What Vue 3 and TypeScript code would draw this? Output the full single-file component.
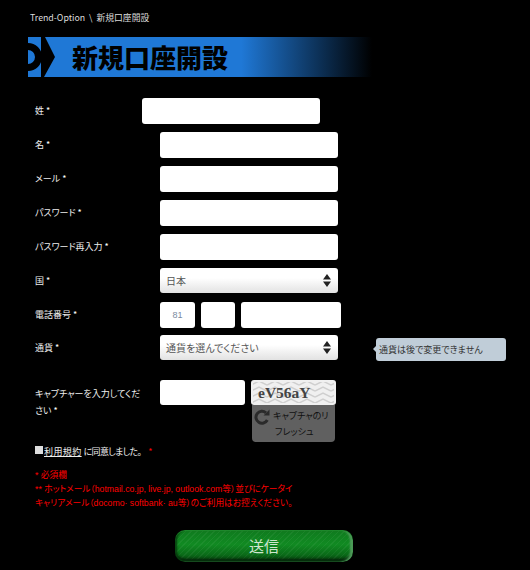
<script setup lang="ts">
interface Row { label: string; first?: boolean }
const textRows: Row[] = [
  { label: '姓', first: true },
  { label: '名' },
  { label: 'メール' },
  { label: 'パスワード' },
  { label: 'パスワード再入力' },
]
</script>

<template>
  <div class="page">
    <div class="crumb">Trend-Option&nbsp; \ &nbsp;新規口座開設</div>
    <div class="banner">
      <svg class="mark" width="28" height="40" viewBox="0 0 28 40">
        <path d="M13 0H17L27 20L16 40H13ZM0 6A14 14 0 0 1 0 34V27A7 7 0 0 0 0 13Z" fill="#000"/>
      </svg>
      <h1 class="title">新規口座開設</h1>
    </div>

    <div class="form">
      <div v-for="r in textRows" :key="r.label" class="row">
        <div class="label">{{ r.label }} <span class="star">*</span></div>
        <div class="input" :class="{ shifted: r.first }"></div>
      </div>

      <div class="row">
        <div class="label">国 <span class="star">*</span></div>
        <div class="select">
          <span>日本</span>
          <svg class="updown" width="8" height="13" viewBox="0 0 8 13"><path d="M4 0L8 5.500H0ZM0 7.500H8L4 13Z" fill="#222"/></svg>
        </div>
      </div>

      <div class="row phone-row">
        <div class="label">電話番号 <span class="star">*</span></div>
        <div class="phone">
          <div class="input code">81</div>
          <div class="input area"></div>
          <div class="input number"></div>
        </div>
      </div>

      <div class="row">
        <div class="label">通貨 <span class="star">*</span></div>
        <div class="select">
          <span>通貨を選んでください</span>
          <svg class="updown" width="8" height="13" viewBox="0 0 8 13"><path d="M4 0L8 5.500H0ZM0 7.500H8L4 13Z" fill="#222"/></svg>
        </div>
        <div class="tip">通貨は後で変更できません</div>
      </div>

      <div class="captcha-row">
        <div class="label wrap">キャプチャーを入力してください <span class="star">*</span></div>
        <div class="input small"></div>
        <div class="captcha">
          <div class="captcha-img">
            <svg class="zigzag" width="85" height="25" viewBox="0 0 85 25">
              <defs>
                <pattern id="zz" width="16" height="6" patternUnits="userSpaceOnUse">
                  <path d="M0 5L8 1L16 5" fill="none" stroke="#cfcfcf" stroke-width="1.500"/>
                </pattern>
              </defs>
              <rect width="85" height="25" fill="#f0f0f0"/>
              <rect x="2" y="2" width="81" height="21" fill="url(#zz)"/>
            </svg>
            <span class="code-text">eV56aY</span>
          </div>
          <div class="refresh">
            <svg class="reload" width="16" height="16" viewBox="0 0 16 16">
              <path d="M13.300 11A6 6 0 1 1 12 3.800" fill="none" stroke="#2a2a2a" stroke-width="3"/>
              <path d="M9.500 6.500H15.500V0.500Z" fill="#2a2a2a"/>
            </svg>
            <span class="refresh-text">キャプチャのリ</span>
            <span class="refresh-text second">フレッシュ</span>
          </div>
        </div>
      </div>

      <div class="agree">
        <span class="check"></span>
        <span><a class="terms">利用規約</a> <span class="agree-text">に同意しました。</span></span>
        <span class="star red">*</span>
      </div>

      <div class="notes">
        <p>* 必須欄</p>
        <p>** ホットメール（hotmail.co.jp, live.jp, outlook.com等）並びにケータイ<br>キャリアメール（docomo· softbank· au等）のご利用はお控えください。</p>
      </div>

      <div class="submit-wrap">
        <button class="submit" type="button">送信</button>
      </div>
    </div>
  </div>
</template>

<style scoped>
.page {
  width: 530px;
  height: 570px;
  box-sizing: border-box;
  background: #000;
  overflow: hidden;
  color: #fff;
  font-family: "Noto Sans CJK JP", "Liberation Sans", sans-serif;
  font-size: 9px;
  font-feature-settings: "palt";
  padding-top: 11px;
}
.crumb {
  padding-left: 30px;
  height: 14px;
  line-height: 14px;
  font-size: 8.800px;
  color: #ddd;
}
.banner {
  margin: 12px 0 0 28px;
  width: 344px;
  height: 40px;
  position: relative;
  display: flex;
  align-items: center;
  background: linear-gradient(90deg, #1f78d6, #1f78d6 62%, #000 100%);
}
.mark {
  position: absolute;
  left: 0;
  top: 0;
}
.title {
  margin: 0 0 0 44px;
  position: relative;
  font-size: 26px;
  line-height: 40px;
  font-weight: 900;
  color: #000;
  font-feature-settings: normal;
}
.form {
  padding: 21px 0 0 35px;
}
.row {
  display: flex;
  align-items: flex-start;
  height: 34px;
}
.row:nth-child(n+6) {
  height: 33.500px;
}
.label {
  width: 125px;
  flex: none;
  line-height: 26px;
  font-size: 9px;
  color: #eee;
}
.star {
  color: #fff;
}
.input {
  width: 178px;
  height: 26px;
  background: #fff;
  border-radius: 3px;
  box-sizing: border-box;
}
.shifted {
  margin-left: -18px;
}
.select {
  width: 178px;
  height: 25px;
  box-sizing: border-box;
  border-radius: 3px;
  background: linear-gradient(180deg, #fff, #fff 40%, #e2e2e2);
  color: #555;
  font-size: 10px;
  line-height: 25px;
  padding: 0 7px 0 6px;
  display: flex;
  justify-content: space-between;
  align-items: center;
}
.phone {
  display: flex;
  gap: 6px;
}
.code {
  width: 35px;
  color: #7a8aa0;
  font-size: 9px;
  font-family: "Liberation Sans", sans-serif;
  text-align: center;
  line-height: 26px;
}
.area {
  width: 34px;
}
.number {
  width: 100px;
}
.tip {
  margin: 3px 0 0 38px;
  position: relative;
  width: 130px;
  height: 23px;
  box-sizing: border-box;
  background: #c0cdd8;
  border-radius: 3px;
  color: #333;
  font-size: 9px;
  line-height: 23px;
  padding-left: 3px;
}
.tip::before {
  content: "";
  position: absolute;
  left: -3px;
  top: 8px;
  border-style: solid;
  border-width: 3px 3px 3px 0;
  border-color: transparent #c0cdd8 transparent transparent;
}
.captcha-row {
  display: flex;
  align-items: flex-start;
  margin-top: 11px;
  height: 63px;
}
.wrap {
  line-height: 17px;
  padding-top: 5px;
  padding-right: 14px;
  box-sizing: border-box;
}
.small {
  width: 85px;
  height: 25px;
  flex: none;
}
.captcha {
  margin-left: 6px;
  width: 85px;
}
.captcha-img {
  height: 25px;
  position: relative;
  overflow: hidden;
  border-radius: 3px;
}
.zigzag {
  display: block;
}
.code-text {
  position: absolute;
  left: 7px;
  top: 0;
  line-height: 25px;
  font-family: "Liberation Serif", serif;
  font-size: 15.500px;
  font-weight: 700;
  color: #444;
}
.refresh {
  margin: 0 1px;
  height: 37px;
  background: #606060;
  border-radius: 0 0 4px 4px;
  position: relative;
  box-sizing: border-box;
  padding: 3px 2px 0 21px;
  color: #111;
  font-size: 9px;
  line-height: 16px;
}
.reload {
  position: absolute;
  left: 2px;
  top: 4px;
}
.refresh-text {
  display: block;
  white-space: nowrap;
}
.second {
  padding-left: 2px;
}
.agree {
  display: flex;
  align-items: center;
  height: 16px;
  color: #eee;
  font-size: 9px;
  gap: 1px;
  padding-top: 1px;
  box-sizing: border-box;
}
.check {
  width: 8px;
  height: 8px;
  background: #ddd;
  margin-top: -3px;
}
.terms {
  text-decoration: underline;
  color: #eee;
  letter-spacing: 0.4px;
}
.agree-text {
  letter-spacing: -0.700px;
}
.red {
  color: #f00;
  margin-left: 6px;
}
.notes {
  margin-top: 9px;
  color: #f00;
  font-size: 8.700px;
  line-height: 14px;
  font-family: "Liberation Sans", "Noto Sans CJK JP", sans-serif;
}
.notes p {
  margin: 0;
}
.submit-wrap {
  margin-top: 20px;
  padding-left: 140px;
}
.submit {
  display: block;
  width: 178px;
  height: 32px;
  border: none;
  border-radius: 10px;
  padding: 0;
  color: #cfe6cf;
  font-family: inherit;
  font-size: 15px;
  line-height: 32px;
  background:
    repeating-linear-gradient(135deg, rgba(255,255,255,0.05) 0 1px, transparent 1px 4px),
    linear-gradient(180deg, #0f7a1e 0%, #118a22 45%, #0a6a18 78%, #052f0a 100%);
  box-shadow: inset 0 1px 1px #1f8a2c, inset -3px 0 2px #4f9a5a, inset 2px 0 2px #06400e, inset 0 -3px 2px #04280a;
}
</style>

<style>
html, body { background: #000; margin: 0; }
</style>
